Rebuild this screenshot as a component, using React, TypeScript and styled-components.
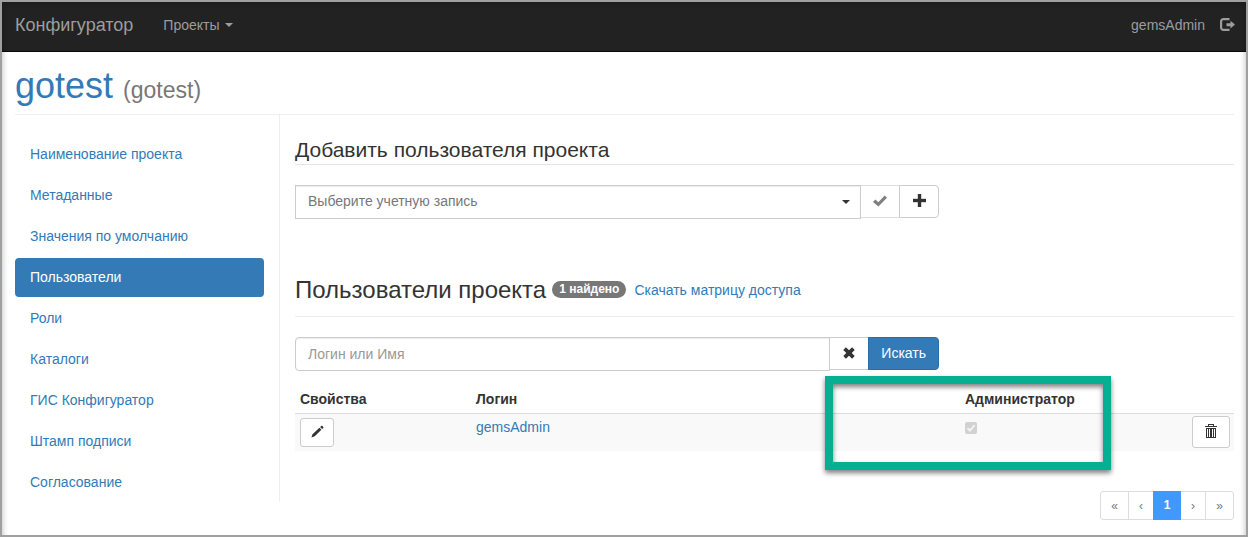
import React from "react";
import styled, { createGlobalStyle, css } from "styled-components";

const GlobalStyle = createGlobalStyle`
  *, *::before, *::after { box-sizing: border-box; }
  body {
    margin: 0;
    background: #fff;
    color: #333;
    font: 14px/20px "Liberation Sans", Arial, sans-serif;
  }
  a { color: #337ab7; text-decoration: none; }
  button, input, select { font: inherit; color: inherit; margin: 0; }
  button { cursor: pointer; }
`;

const Frame = styled.div`
  position: relative;
  min-height: 100vh;
  border: 2px solid #a0a0a0;
  &::after {
    content: "";
    position: absolute;
    inset: 0 0 -6px;
    clip-path: inset(0 0 6px);
    pointer-events: none;
    box-shadow: inset 0 0 6px rgba(0, 0, 0, 0.3);
  }
`;

const Navbar = styled.nav`
  display: flex;
  align-items: center;
  height: 50px;
  padding: 0 11px 4px 13px;
  background: #222;
  border-bottom: 1px solid #080808;
`;

const Brand = styled.a`
  color: #9d9d9d;
  font-size: 18px;
  margin-right: 30px;
`;

const NavButton = styled.button`
  display: flex;
  align-items: center;
  gap: 5px;
  padding: 0;
  border: 0;
  background: none;
  color: #9d9d9d;
`;

const NavUser = styled.div`
  display: flex;
  align-items: center;
  gap: 15px;
  margin-left: auto;
  color: #9d9d9d;
`;

const NavLink = styled.a`
  color: inherit;
`;

const PageHeader = styled.header`
  margin: 0 12px 0 13px;
  height: 63px;
  padding-top: 14px;
  border-bottom: 1px solid #eee;
`;

const Title = styled.h1`
  margin: 0;
  font-size: 36px;
  line-height: 40px;
  font-weight: normal;
`;

const TitleNote = styled.small`
  font-size: 23px;
  color: #777;
`;

const Columns = styled.div`
  display: flex;
  align-items: flex-start;
  padding: 0 12px 0 13px;
`;

const Sidebar = styled.ul`
  flex: none;
  width: 265px;
  margin: 0;
  padding: 20px 15px 0 0;
  list-style: none;
  border-right: 1px solid #eee;
  display: flex;
  flex-direction: column;
  gap: 2px;
`;

const SideLink = styled.a<{ $active?: boolean }>`
  display: block;
  height: 39px;
  padding: 9px 15px 10px;
  border-radius: 4px;
  ${(p) => p.$active && css`
    background: #337ab7;
    color: #fff;
  `}
`;

const Content = styled.main`
  flex: 1;
  min-width: 0;
  padding: 24px 0 0 15px;
`;

const FormTitle = styled.h2`
  margin: 0 0 20px;
  height: 26px;
  font-size: 21px;
  line-height: 21px;
  font-weight: normal;
  border-bottom: 1px solid #e5e5e5;
`;

const InputGroup = styled.div`
  display: flex;
  align-items: flex-start;
  max-width: 644px;
`;

const SelectBox = styled.div`
  position: relative;
  flex: 1;
  display: flex;
`;

const SelectCaret = styled.span`
  position: absolute;
  right: 11px;
  top: 15px;
  display: flex;
  pointer-events: none;
`;

const Select = styled.select`
  appearance: none;
  width: 100%;
  height: 34px;
  padding: 0 30px 2px 12px;
  border: 1px solid #ccc;
  border-radius: 0;
  background: #fff;
  box-shadow: inset 0 1px 1px rgba(0, 0, 0, 0.075);
  color: #777;
`;

const TextInput = styled.input`
  flex: 1;
  min-width: 0;
  height: 34px;
  padding: 0 12px;
  border: 1px solid #ccc;
  border-radius: 4px 0 0 4px;
  box-shadow: inset 0 1px 1px rgba(0, 0, 0, 0.075);
  &::placeholder { color: #999; opacity: 1; }
`;

const Button = styled.button<{ $last?: boolean; $primary?: boolean }>`
  display: flex;
  align-items: center;
  justify-content: center;
  flex: none;
  height: 33px;
  min-width: 40px;
  margin-left: -1px;
  padding: 0 12px 2px;
  border: 1px solid #ccc;
  border-radius: ${(p) => (p.$last ? "0 4px 4px 0" : "0")};
  background: #fff;
  &:disabled { border-color: #ddd; color: #808080; }
  ${(p) => p.$primary && css`
    background: #337ab7;
    border-color: #2e6da4;
    color: #fff;
  `}
`;

const UsersHeader = styled.div`
  display: flex;
  align-items: center;
  margin: 54px 0 20px;
  height: 44px;
  padding-bottom: 10px;
  border-bottom: 1px solid #eee;
`;

const UsersTitle = styled.h2`
  margin: 0;
  font-size: 24px;
  line-height: 28px;
  font-weight: normal;
`;

const Badge = styled.span`
  margin: 0 8px 0 6px;
  padding: 0 7px;
  border-radius: 10px;
  background: #777;
  color: #fff;
  font-size: 12px;
  line-height: 17px;
  font-weight: bold;
`;

const Table = styled.table`
  width: 100%;
  table-layout: fixed;
  border-collapse: collapse;
  th, td { text-align: left; vertical-align: top; padding: 0 5px; }
  th { height: 27px; padding-top: 3px; border-bottom: 1px solid #ddd; }
  td { height: 37px; background: #f9f9f9; }
  td:last-child { padding-right: 4px; }
`;

const Col = styled.col<{ $w?: string }>`
  width: ${(p) => p.$w || "auto"};
`;

const UserLink = styled.a`
  display: block;
  padding-top: 3px;
`;

const IconButton = styled.button<{ $large?: boolean }>`
  display: flex;
  align-items: center;
  justify-content: center;
  width: ${(p) => (p.$large ? 38 : 34)}px;
  height: ${(p) => (p.$large ? 32 : 29)}px;
  margin: ${(p) => (p.$large ? "2px 0 3px auto" : "4px 0")};
  padding: 0 0 2px;
  border: 1px solid #ccc;
  border-radius: 3px;
  background: #fff;
`;

const AdminCheck = styled.input`
  display: block;
  appearance: none;
  width: 12px;
  height: 12px;
  border-radius: 2px;
  background: #d1d1d1;
`;

const CheckCell = styled.label`
  position: relative;
  display: block;
  width: 12px;
  margin-top: 8px;
`;

const CheckMark = styled.svg`
  position: absolute;
  inset: 0;
  pointer-events: none;
`;

const AdminArea = styled.div`
  position: relative;
  padding-top: 15px;
`;

const Highlight = styled.div`
  position: absolute;
  top: 5px;
  right: 123px;
  width: 286px;
  height: 94px;
  border: 8px solid #06af91;
  box-shadow: 0 3px 5px rgba(0, 0, 0, 0.5), inset 0 3px 5px rgba(0, 0, 0, 0.5);
  pointer-events: none;
`;

const Pagination = styled.nav`
  display: flex;
  justify-content: flex-end;
  margin-top: 40px;
  padding-bottom: 15px;
`;

const PageButton = styled.button<{ $active?: boolean; $wide?: boolean }>`
  width: ${(p) => (p.$active ? 28 : p.$wide ? 29 : 26)}px;
  height: 29px;
  padding: 2px 0 0;
  margin-left: -1px;
  border: 1px solid #ddd;
  background: #fff;
  color: #777;
  font-size: 12px;
  line-height: 25px;
  &:first-child { border-radius: 3px 0 0 3px; }
  &:last-child { border-radius: 0 3px 3px 0; }
  ${(p) => p.$active && css`
    position: relative;
    padding: 0;
    border-color: #4199ff;
    background: #4199ff;
    color: #fff;
    font-weight: bold;
  `}
`;

const Caret = () => (
  <svg width="8" height="4" viewBox="0 0 8 4" aria-hidden="true">
    <path d="M0 0h8L4 4z" fill="currentColor" />
  </svg>
);

const LogOutIcon = () => (
  <svg width="15" height="14" viewBox="0 0 15 14" aria-hidden="true">
    <path d="M9.5 1.1H3.4A2.3 2.3 0 0 0 1.1 3.4v6.2a2.3 2.3 0 0 0 2.3 2.3h6.1" fill="none" stroke="currentColor" strokeWidth="2.2" />
    <path d="M6.5 5.2h4V2.7l4.5 3.9-4.5 3.9V8.2h-4z" fill="currentColor" />
  </svg>
);

const CheckIcon = () => (
  <svg width="14" height="12" viewBox="0 0 14 12" aria-hidden="true">
    <path d="M0 6.9 2.4 4.5l2.9 2.7L11.7.4 14 2.7 5.4 11.6z" fill="currentColor" />
  </svg>
);

const PlusIcon = () => (
  <svg width="13" height="13" viewBox="0 0 13 13" aria-hidden="true">
    <path d="M5 0h3v5h5v3H8v5H5V8H0V5h5z" fill="currentColor" stroke="currentColor" strokeWidth="0.4" />
  </svg>
);

const RemoveIcon = () => (
  <svg width="12" height="12" viewBox="0 0 12 12" aria-hidden="true">
    <path d="m.3 2.9 2.6-2.6L6 3.3 9.1.3l2.6 2.6L8.7 6l3 3.1-2.6 2.6L6 8.7l-3.1 3L.3 9.1 3.3 6z" fill="currentColor" />
  </svg>
);

const PencilIcon = () => (
  <svg width="13" height="13" viewBox="0 0 13 13" aria-hidden="true">
    <path d="M.4 12.5 1.5 9.3l6.9-6.5 2 1.9-6.7 6.6zM9.1 2.1 10.3 1c.3-.3.8-.3 1.100 0l.9.9c.3.3.3.7 0 1l-1.200 1.100z" fill="currentColor" />
  </svg>
);

const TrashIcon = () => (
  <svg width="12" height="14" viewBox="0 0 12 14" aria-hidden="true">
    <path fillRule="evenodd" d="M3 2V0h6v2h3v1H0V2zm1 0h4V1H4z" fill="currentColor" />
    <path fillRule="evenodd" d="M1 4h10v10H1zM2 5v8h1V5zm2 0v8h1V5zm3 0v8h1V5zm2 0v8h1V5z" fill="currentColor" />
  </svg>
);

const sections = [
  "Наименование проекта",
  "Метаданные",
  "Значения по умолчанию",
  "Пользователи",
  "Роли",
  "Каталоги",
  "ГИС Конфигуратор",
  "Штамп подписи",
  "Согласование",
];

export default function App() {
  return (
    <>
      <GlobalStyle />
      <Frame>
        <Navbar>
          <Brand href="#">Конфигуратор</Brand>
          <NavButton type="button">Проекты <Caret /></NavButton>
          <NavUser>
            <NavLink href="#">gemsAdmin</NavLink>
            <NavButton type="button" aria-label="Выйти"><LogOutIcon /></NavButton>
          </NavUser>
        </Navbar>
        <PageHeader>
          <Title><a href="#">gotest</a> <TitleNote>(gotest)</TitleNote></Title>
        </PageHeader>
        <Columns>
          <Sidebar>
            {sections.map((name) => (
              <li key={name}>
                <SideLink href="#" $active={name === "Пользователи"}>{name}</SideLink>
              </li>
            ))}
          </Sidebar>
          <Content>
            <FormTitle>Добавить пользователя проекта</FormTitle>
            <InputGroup>
              <SelectBox>
                <Select aria-label="Учетная запись">
                  <option>Выберите учетную запись</option>
                </Select>
                <SelectCaret><Caret /></SelectCaret>
              </SelectBox>
              <Button type="button" disabled aria-label="Подтвердить"><CheckIcon /></Button>
              <Button type="button" $last aria-label="Добавить"><PlusIcon /></Button>
            </InputGroup>
            <UsersHeader>
              <UsersTitle>Пользователи проекта</UsersTitle>
              <Badge>1 найдено</Badge>
              <a href="#">Скачать матрицу доступа</a>
            </UsersHeader>
            <InputGroup>
              <TextInput type="text" placeholder="Логин или Имя" aria-label="Логин или Имя" />
              <Button type="button" aria-label="Очистить"><RemoveIcon /></Button>
              <Button type="button" $primary $last>Искать</Button>
            </InputGroup>
            <AdminArea>
              <Table>
                <colgroup>
                  <Col $w="176px" />
                  <Col />
                  <Col $w="222px" />
                  <Col $w="52px" />
                </colgroup>
                <thead>
                  <tr><th>Свойства</th><th>Логин</th><th>Администратор</th><th /></tr>
                </thead>
                <tbody>
                  <tr>
                    <td><IconButton type="button" aria-label="Изменить"><PencilIcon /></IconButton></td>
                    <td><UserLink href="#">gemsAdmin</UserLink></td>
                    <td>
                      <CheckCell>
                        <AdminCheck type="checkbox" defaultChecked disabled aria-label="Администратор" />
                        <CheckMark width="12" height="12" viewBox="0 0 12 12" aria-hidden="true">
                          <path d="m2.5 6.2 2.4 2.4 4.7-5.4" fill="none" stroke="#f5f5f5" strokeWidth="1.8" />
                        </CheckMark>
                      </CheckCell>
                    </td>
                    <td><IconButton type="button" $large aria-label="Удалить"><TrashIcon /></IconButton></td>
                  </tr>
                </tbody>
              </Table>
              <Highlight />
            </AdminArea>
            <Pagination aria-label="Страницы">
              <PageButton type="button" $wide aria-label="Первая">«</PageButton>
              <PageButton type="button" aria-label="Назад">‹</PageButton>
              <PageButton type="button" $active>1</PageButton>
              <PageButton type="button" aria-label="Вперед">›</PageButton>
              <PageButton type="button" $wide aria-label="Последняя">»</PageButton>
            </Pagination>
          </Content>
        </Columns>
      </Frame>
    </>
  );
}
